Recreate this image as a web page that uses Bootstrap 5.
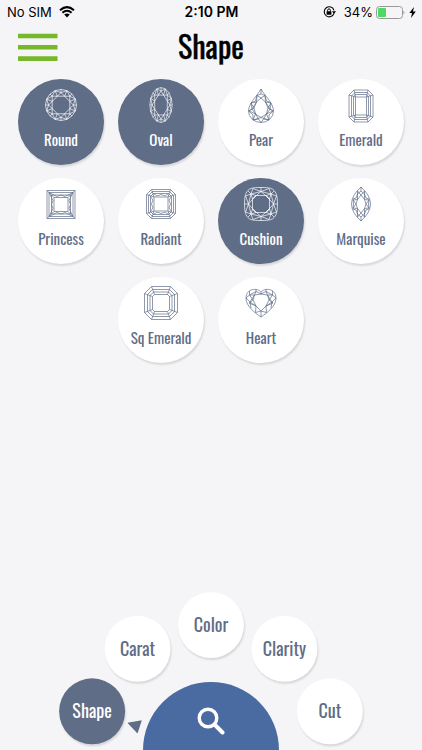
<!DOCTYPE html>
<html lang="en">
<head>
<meta charset="utf-8">
<meta name="viewport" content="width=device-width, initial-scale=1">
<title>Shape</title>
<link href="https://cdn.jsdelivr.net/npm/bootstrap@5.3.0/dist/css/bootstrap.min.css" rel="stylesheet">
<style>
  :root { --slate: #5f6d87; --label: "Oswald", "Roboto Condensed", "Liberation Sans Narrow", "Liberation Sans", sans-serif; }
  body { background: #f5f5f8; font-family: var(--label); color: #000; }
  .status { font-family: Inter, Roboto, sans-serif; font-size: 13px; line-height: 24px; padding: 0 6px 0 7px; }
  .status > div { flex: 1 1 0; }
  .clock { font-weight: 600; font-size: 14px; }
  .signal { gap: 7px; }
  .level { margin-right: 2px; }
  .titlebar { display: grid; grid-template-columns: 60px 1fr 60px; height: 46px; }
  .titlebar h1 { font-size: 30px; line-height: 44px; font-weight: 400; -webkit-text-stroke: .4px; }
  .shapes { padding: 9px 11px 0; row-gap: 13px; }
  .disc { border-radius: 50%; border: 0; padding: 0; background: #fff; color: var(--slate); box-shadow: 1px 2px 2px rgba(0,0,0,.12); font-weight: 400; }
  .disc.active { background: var(--slate); color: #fff; }
  .shape-btn { width: 86px; height: 86px; padding-top: 6px; font-size: 15px; line-height: 20px; }
  .gem { width: 40px; height: 40px; fill: none; stroke: currentColor; stroke-width: .7; stroke-linejoin: round; margin-bottom: 4px; }
  .gem * { vector-effect: non-scaling-stroke; }
  .dial { height: 158px; overflow: hidden; }
  .step-btn { position: absolute; left: 50%; bottom: 0; width: 66px; height: 66px; margin: 0 0 -33px -33px; padding-bottom: 1px; font-size: 18px; transform: rotate(var(--a)) translateY(-125px) rotate(calc(-1 * var(--a))); }
  .pointer { position: absolute; left: 50%; bottom: 0; width: 14px; height: 14px; margin: 0 0 -7px -7px; transform: rotate(-72deg) translateY(-81px); }
  .search-btn { position: absolute; left: 50%; bottom: 0; width: 136px; height: 136px; margin: 0 0 -68px -68px; padding: 0 0 58px; border: 0; border-radius: 50%; background: #4a6ba2; color: #fff; }
</style>
</head>
<body>
<svg class="d-none" aria-hidden="true">
  <symbol id="brilliant" viewBox="-16 -16 32 32" preserveAspectRatio="none" overflow="visible">
    <circle r="15.5"/>
    <path d="M0-12.4 12.4 0 0 12.4-12.4 0ZM-8.8-8.8H8.8V8.8H-8.8Z"/>
    <path d="M0-12.4 5.9-14.3 8.8-8.8 14.3-5.9 12.4 0 14.3 5.9 8.8 8.8 5.9 14.3 0 12.4-5.9 14.3-8.8 8.8-14.3 5.9-12.4 0-14.3-5.9-8.8-8.8-5.9-14.3Z"/>
    <path d="M0-15.5V-12.4M0 15.5V12.4M-15.5 0H-12.4M15.5 0H12.4M11-11 8.8-8.8M-11-11-8.8-8.8M11 11 8.8 8.8M-11 11-8.8 8.8"/>
    <path d="M3.6-8.8 5.9-14.3M-3.6-8.8-5.9-14.3M3.6 8.8 5.9 14.3M-3.6 8.8-5.9 14.3M8.8-3.6 14.3-5.9M8.8 3.6 14.3 5.9M-8.8-3.6-14.3-5.9M-8.8 3.6-14.3 5.9"/>
  </symbol>
</svg>
<div class="d-flex flex-column min-vh-100 overflow-hidden">
  <div class="status d-flex align-items-center">
    <div class="signal d-flex align-items-center"><span>No SIM</span>
      <svg width="16" height="12" viewBox="0 0 16 12" aria-label="Wi-Fi"><path d="M1 4.2Q8-2 15 4.2M3.4 6.8Q8 2.8 12.6 6.8" fill="none" stroke="#000" stroke-width="2"/><path d="M5.2 8.6Q8 6.2 10.8 8.6L8 11.5Z"/></svg>
    </div>
    <span class="clock">2:10 PM</span>
    <div class="d-flex align-items-center justify-content-end">
      <svg class="me-2" width="13" height="12" viewBox="0 0 13 12" aria-label="Rotation lock"><path d="M11 7.3A5 5 0 1 1 11 4.3" fill="none" stroke="#000" stroke-width="1.1"/><path d="M9 5.2H13L11 8ZM3.6 5.3H8.4V8.8H3.6Z"/><path d="M4.6 5.5V4.3a1.4 1.4 0 0 1 2.8 0V5.5" fill="none" stroke="#000"/></svg>
      <span class="level">34%</span>
      <svg width="30" height="13" viewBox="0 0 30 13" aria-label="Battery"><rect x="1.5" y=".5" width="26" height="12" rx="3" fill="none" stroke="#999"/><rect x="3" y="2" width="8" height="9" rx="1" fill="#4cd964"/><path d="M28.500 4.500q2 2 0 4Z" fill="#999"/></svg>
      <svg class="ms-1" width="7" height="11" viewBox="0 0 7 11" aria-label="Charging"><path d="M5 0 .3 6H3L2 11 6.8 4.6H4Z"/></svg>
    </div>
  </div>
  <header class="titlebar align-items-start">
    <button class="btn p-0 border-0 rounded-0 lh-1 text-end align-self-center" type="button" aria-label="Menu"><svg width="42" height="28" viewBox="0 0 42 28"><path d="M0 3H39.5M0 14.3H39.5M0 25.6H39.5" stroke="#76b82a" stroke-width="4.6"/></svg></button>
    <h1 class="m-0 text-center">Shape</h1>
  </header>
  <main class="shapes row g-0 justify-content-center">
    <div class="col-3"><button class="disc shape-btn active d-flex flex-column align-items-center mx-auto" type="button" aria-pressed="true"><svg class="gem" viewBox="0 0 40 40"><use href="#brilliant" x="4" y="4" width="32" height="32"/></svg>Round</button></div>
    <div class="col-3"><button class="disc shape-btn active d-flex flex-column align-items-center mx-auto" type="button" aria-pressed="true"><svg class="gem" viewBox="0 0 40 40"><use href="#brilliant" x="8.5" y="2" width="23" height="36"/></svg>Oval</button></div>
    <div class="col-3"><button class="disc shape-btn d-flex flex-column align-items-center mx-auto" type="button" aria-pressed="false"><svg class="gem" viewBox="0 0 40 40"><path d="M20 4C17 10 7.5 18 7.5 26a12.5 11.5 0 0 0 25 0C32.5 18 23 10 20 4Z"/><path d="M20 13 24.5 17 27 23 25.5 29 20 32.5 14.5 29 13 23 15.5 17Z"/><path d="M20 4V9L24 10.5 25.5 16 30 18 29 24 32.3 26 28 30 28 35 22.5 34 20 37.5 17.5 34 12 35 12 30 7.7 26 11 24 10 18 14.5 16 16 10.5 20 9"/><path d="M16 10.5 20 13 24 10.5M30 18 27 23 32 26 25.5 29 28 35 20 32.5 12 35 14.5 29 8 26 13 23 10 18M24.5 17 29 24 25.5 29 22.5 34M15.5 17 11 24 14.5 29 17.5 34M24 10.500 24.500 17 30 18M16 10.500 15.500 17 10 18"/></svg>Pear</button></div>
    <div class="col-3"><button class="disc shape-btn d-flex flex-column align-items-center mx-auto" type="button" aria-pressed="false"><svg class="gem" viewBox="0 0 40 40"><path d="M13 5H27L32 10V32L27 37H13L8 32V10ZM14 7.5H26L29.5 11V31L26 34.5H14L10.5 31V11ZM14.5 9.5H25.5L27.5 12V30L25.5 32.5H14.5L12.5 30V12ZM14.5 12H25.5V30H14.5ZM13 5 14.5 12 8 10M27 5 25.5 12 32 10M13 37 14.5 30 8 32M27 37 25.5 30 32 32"/></svg>Emerald</button></div>
    <div class="col-3"><button class="disc shape-btn d-flex flex-column align-items-center mx-auto" type="button" aria-pressed="false"><svg class="gem" viewBox="0 0 40 40"><path d="M6 6.500H34V34.500H6ZM8 8.500H32V32.500H8ZM10.500 11H29.500V30H10.500ZM13 13.500H27V27.500H13ZM6 6.500 13 13.500M34 6.500 27 13.500M6 34.500 13 27.500M34 34.500 27 27.500"/><path d="M8 8.500 16 12.500 20 11 24 12.500 32 8.500 28 16.500 29.500 20.500 28 24.500 32 32.500 24 28.500 20 30 16 28.500 8 32.500 12 24.500 10.500 20.500 12 16.500Z"/></svg>Princess</button></div>
    <div class="col-3"><button class="disc shape-btn d-flex flex-column align-items-center mx-auto" type="button" aria-pressed="false"><svg class="gem" viewBox="0 0 40 40"><path d="M10.500 5.500H29.500L34.500 10.500V29.500L29.500 34.500H10.500L5.500 29.500V10.500ZM11.500 7.500H28.500L32.500 11.500V28.500L28.500 32.500H11.500L7.500 28.500V11.500ZM12.500 9.500H27.500L30.500 12.500V27.500L27.500 30.500H12.500L9.500 27.500V12.500ZM13 13H27V27H13Z"/><path d="M10.500 5.500 13 13 5.500 10.500M29.500 5.500 27 13 34.500 10.500M10.500 34.500 13 27 5.500 29.500M29.500 34.500 27 27 34.500 29.500M12.500 9.500 16 12 20 10.500 24 12 27.500 9.500M12.500 30.500 16 28 20 29.500 24 28 27.500 30.500M9.500 12.500 12 16 10.500 20 12 24 9.500 27.500M30.500 12.500 28 16 29.500 20 28 24 30.500 27.500"/></svg>Radiant</button></div>
    <div class="col-3"><button class="disc shape-btn active d-flex flex-column align-items-center mx-auto" type="button" aria-pressed="true"><svg class="gem" viewBox="0 0 40 40"><path d="M20 3.500C31 3.500 36.500 4 36.500 20S31 36.500 20 36.500 3.500 36 3.500 20 9 3.500 20 3.500Z"/><path d="M15 11.500H25L28.500 15V25L25 28.500H15L11.500 25V15Z"/><path d="M12 4.500 20 7.500 28 4.500 30 10 35.500 12 32.500 20 35.500 28 30 30 28 35.500 20 32.500 12 35.500 10 30 4.500 28 7.500 20 4.500 12 10 10Z"/><path d="M20 7.500 30 10 32.500 20 30 30 20 32.500 10 30 7.500 20 10 10ZM20 7.500 28.500 15 30 10 25 11.500 32.500 20 25 28.500 30 30 28.500 25 20 32.500 11.500 25 10 30 15 28.500 7.500 20 15 11.500 10 10 11.500 15ZM20 3.500V7.500M20 32.500V36.500M3.500 20H7.500M32.500 20H36.500M7 7 10 10M33 7 30 10M7 33 10 30M33 33 30 30"/></svg>Cushion</button></div>
    <div class="col-3"><button class="disc shape-btn d-flex flex-column align-items-center mx-auto" type="button" aria-pressed="false"><svg class="gem" viewBox="0 0 40 40"><path d="M20 3Q39 20 20 37Q1 20 20 3Z"/><path d="M20 11 23.500 15.500 25 20 23.500 24.500 20 29 16.500 24.500 15 20 16.500 15.500Z"/><path d="M20 3V7L23.500 10 25 14 28 15 27.500 20 28 25 25 26 23.500 30 20 33V37M20 7 16.500 10 15 14 12 15 12.500 20 12 25 15 26 16.500 30 20 33M16.500 7 20 11 23.500 7 23.500 15.500 28 16 25 20 28 24 23.500 24.500 23.500 33 20 29 16.500 33 16.500 24.500 12 24 15 20 12 16 16.500 15.500Z"/></svg>Marquise</button></div>
    <div class="col-3"><button class="disc shape-btn d-flex flex-column align-items-center mx-auto" type="button" aria-pressed="false"><svg class="gem" viewBox="0 0 40 40"><path d="M10.500 3.500H29.500L36.500 10.500V29.500L29.500 36.500H10.500L3.500 29.500V10.500ZM11.500 6.500H28.500L33.500 11.500V28.500L28.500 33.500H11.500L6.500 28.500V11.500ZM12.500 9H27.500L31 12.500V27.500L27.500 31H12.500L9 27.500V12.500ZM13.500 11.500H26.500L28.500 13.500V26.500L26.500 28.500H13.500L11.500 26.500V13.500Z"/><path d="M10.500 3.500 13.500 11.500M3.500 10.500 11.500 13.500M29.500 3.500 26.500 11.500M36.500 10.500 28.500 13.500M10.500 36.500 13.500 28.500M3.500 29.500 11.500 26.500M29.500 36.500 26.500 28.500M36.500 29.500 28.500 26.500"/></svg>Sq Emerald</button></div>
    <div class="col-3"><button class="disc shape-btn d-flex flex-column align-items-center mx-auto" type="button" aria-pressed="false"><svg class="gem" viewBox="0 0 40 40"><path d="M20 9C17 5 5 4.500 5 15.500 5 23 14 30 20 34 26 30 35 23 35 15.500 35 4.500 23 5 20 9Z"/><path d="M13.500 12 20 11 26.500 12 28 17 25 23 20 28 15 23 12 17Z"/><path d="M20 9V11L25 8.500 26.500 12 31.500 12 28 17 32 20 25 23 25.500 29.500 20 28V34M20 11 15 8.500 13.500 12 8.500 12 12 17 8 20 15 23 14.500 29.500 20 28M25 6.500V8.500L31.500 12 35 15 31 19 30 25M15 6.500V8.500L8.500 12 5 15 9 19 10 25M26.500 12 31 19 25 23M13.500 12 9 19 15 23M31.500 12V8M8.500 12V8"/></svg>Heart</button></div>
  </main>
  <nav class="dial position-relative mt-auto" aria-label="Filters">
    <button class="disc step-btn active" style="--a:-72deg" type="button">Shape</button>
    <button class="disc step-btn" style="--a:-36deg" type="button">Carat</button>
    <button class="disc step-btn" style="--a:0deg" type="button">Color</button>
    <button class="disc step-btn" style="--a:36deg" type="button">Clarity</button>
    <button class="disc step-btn" style="--a:72deg" type="button">Cut</button>
    <svg class="pointer" viewBox="0 0 14 14" aria-hidden="true"><path d="M7 0 14 13H0Z" fill="#5f6d87"/></svg>
    <button class="search-btn" type="button" aria-label="Search"><svg width="28" height="28" viewBox="0 0 28 28" fill="none" stroke="#fff" stroke-linecap="round"><circle cx="11" cy="11" r="8.800" stroke-width="3.400"/><path d="M18 18 25.500 25.500" stroke-width="4"/></svg></button>
  </nav>
</div>
<script src="https://cdn.jsdelivr.net/npm/bootstrap@5.3.0/dist/js/bootstrap.bundle.min.js"></script>
</body>
</html>
